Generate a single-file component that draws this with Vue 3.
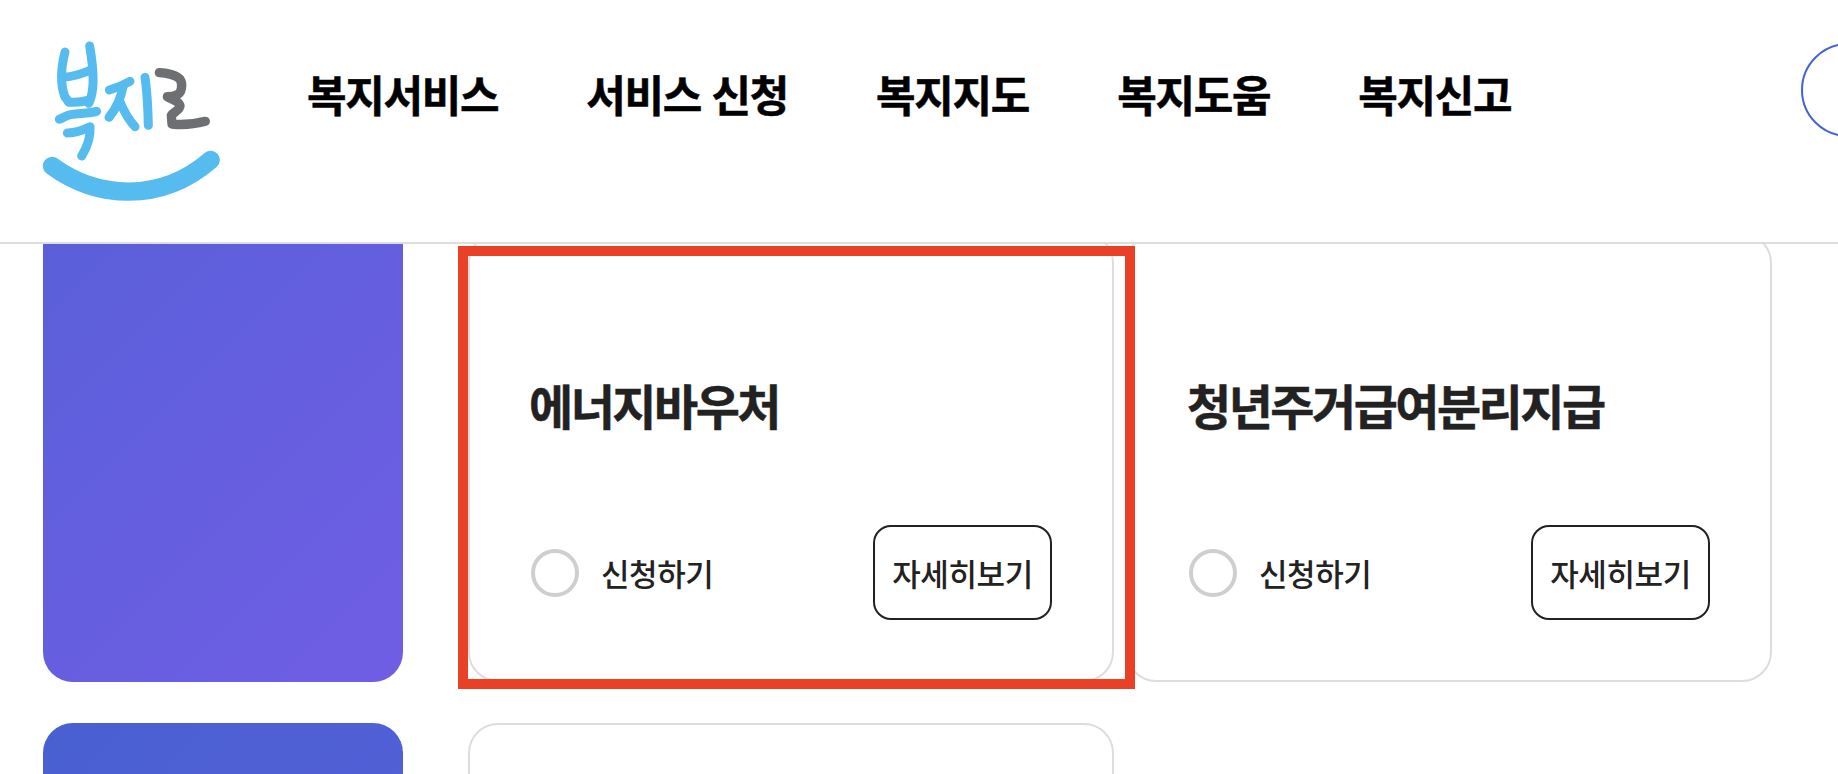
<template>
  <div class="page">
    <header class="site-header">
      <svg class="logo" viewBox="0 0 552 504" fill="none" stroke-linecap="round" stroke-linejoin="round">
        <g stroke="#56bcef" stroke-width="27">
          <path d="M75 42 C64 85 60 135 74 175 L86 192" />
          <path d="M149 24 C156 65 162 115 158 150 C156 170 152 185 146 196" />
          <path d="M70 118 C95 116 125 108 152 96" />
          <path d="M86 192 C105 194 128 192 146 186" />
          <path d="M58 244 C70 240 78 232 92 230 C120 226 148 226 170 220" />
          <path d="M82 285 C105 284 130 276 150 266 C152 295 140 330 125 354" />
          <path d="M208 156 C230 150 252 140 270 130" />
          <path d="M250 142 C244 175 228 212 207 238" />
          <path d="M240 192 C252 220 268 248 285 266" />
          <path d="M315 118 C322 165 324 215 325 262" />
        </g>
        <path d="M358 104 C380 104 410 112 420 124 C430 140 424 165 412 170 C400 176 388 176 382 176 C395 184 418 190 420 204 C420 216 398 224 394 232 L396 258 C430 262 465 258 496 250" stroke="#6e6f73" stroke-width="28" />
        <path d="M36 384 C170 482 360 497 512 366" stroke="#56bcef" stroke-width="55" />
      </svg>

      <nav class="main-nav">
        <a v-for="item in menu" :key="item" class="nav-item">{{ item }}</a>
      </nav>

      <button class="login-circle" type="button" aria-label="메뉴"></button>
    </header>

    <main class="service-list">
      <section v-for="(row, index) in rows" :key="index" class="service-row">
        <div class="thumb" :class="row.thumb"></div>
        <div class="cards">
          <article v-for="card in row.cards" :key="card.title" class="card">
            <template v-if="card.title">
              <h3 class="card-title">{{ card.title }}</h3>
              <div class="card-bottom">
                <label class="apply">
                  <span class="radio"></span>
                  <span>신청하기</span>
                </label>
                <button class="detail-btn" type="button">자세히보기</button>
              </div>
            </template>
            <div v-if="card.marked" class="highlight"></div>
          </article>
        </div>
      </section>
    </main>
  </div>
</template>

<script setup>
const menu = ["복지서비스", "서비스 신청", "복지지도", "복지도움", "복지신고"];

const rows = [
  {
    thumb: "thumb-violet",
    cards: [
      { title: "에너지바우처", marked: true },
      { title: "청년주거급여분리지급", marked: false },
    ],
  },
  {
    thumb: "thumb-blue",
    cards: [{ title: "", marked: false }],
  },
];
</script>

<style>
html,
body {
  margin: 0;
  height: 774px;
  overflow: hidden;
  background: #fff;
}
</style>

<style scoped>
.page {
  width: 1838px;
  height: 774px;
  overflow: hidden;
  font-family: "Noto Sans CJK KR", "Noto Sans", sans-serif;
  color: #222;
}

.site-header {
  position: relative;
  z-index: 2;
  display: flex;
  align-items: flex-start;
  box-sizing: border-box;
  height: 244px;
  padding: 38px 0 0 40px;
  background: #fff;
  border-bottom: 2px solid #ddd;
}

.logo {
  flex: 0 0 184px;
  width: 184px;
  height: 168px;
  filter: blur(0.6px);
}

.main-nav {
  display: flex;
  flex: 0 0 auto;
  gap: 88px;
  margin: 25px 0 0 83px;
}

.nav-item {
  font-size: 43px;
  font-weight: 700;
  line-height: 60px;
  letter-spacing: -1.3px;
  word-spacing: 2px;
  color: #000;
  white-space: nowrap;
  -webkit-text-stroke: 0.5px #000;
}

.login-circle {
  flex: 0 0 94px;
  box-sizing: border-box;
  width: 94px;
  height: 94px;
  margin: 5px 0 0 290px;
  padding: 0;
  background: #fff;
  border: 2px solid #4463d3;
  border-radius: 50%;
}

.service-list {
  display: flex;
  flex-direction: column;
  gap: 41px;
  margin-top: -11px;
  padding-left: 43px;
}

.service-row {
  display: flex;
  gap: 65px;
}

.thumb {
  flex: 0 0 360px;
  height: 449px;
  border-radius: 30px;
}

/* top of this one is scrolled under the header */
.thumb-violet {
  background: linear-gradient(135deg, #5a5fd9, #705ee5);
  border-radius: 0 0 30px 30px;
}

.thumb-blue {
  background: linear-gradient(135deg, #4860d1, #5c5fdb);
}

.cards {
  display: grid;
  grid-template-columns: 646px 646px;
  gap: 12px;
}

.card {
  position: relative;
  box-sizing: border-box;
  height: 449px;
  padding: 139px 60px 0;
  border: 2px solid #ddd;
  border-radius: 30px;
}

.card-title {
  height: 60px;
  margin: 0 0 0 -1px;
  font-size: 48px;
  font-weight: 700;
  line-height: 60px;
  letter-spacing: -2.5px;
  color: #222;
  white-space: nowrap;
  -webkit-text-stroke: 0.5px #222;
}

.card-bottom {
  display: flex;
  align-items: center;
  justify-content: space-between;
  margin-top: 91px;
}

.apply {
  display: flex;
  align-items: center;
  gap: 22px;
  margin-left: 1px;
  font-size: 31px;
  font-weight: 500;
  letter-spacing: -0.4px;
}

.radio {
  box-sizing: border-box;
  width: 48px;
  height: 48px;
  border: 4px solid #cfcfcf;
  border-radius: 50%;
  filter: blur(0.5px);
}

.detail-btn {
  box-sizing: border-box;
  width: 179px;
  height: 95px;
  padding: 0;
  font-family: inherit;
  font-size: 31px;
  font-weight: 500;
  letter-spacing: -0.4px;
  color: #222;
  background: #fff;
  border: 2px solid #222;
  border-radius: 18px;
}

/* red box drawn over the first card */
.highlight {
  position: absolute;
  z-index: 1;
  top: 11px;
  left: -12px;
  box-sizing: border-box;
  width: 677px;
  height: 443px;
  border: 10px solid #ea4026;
  pointer-events: none;
}
</style>
